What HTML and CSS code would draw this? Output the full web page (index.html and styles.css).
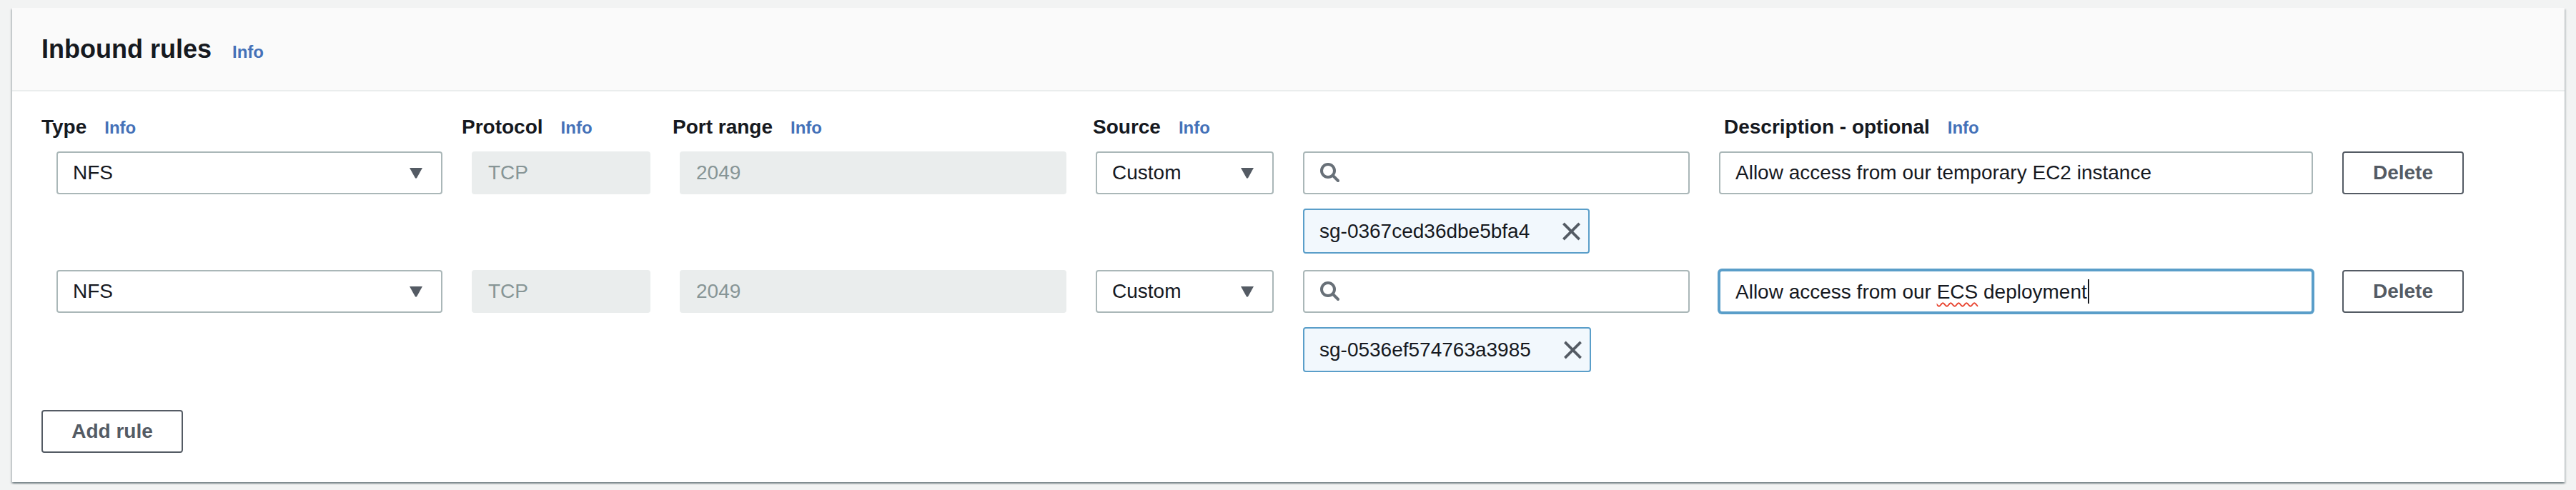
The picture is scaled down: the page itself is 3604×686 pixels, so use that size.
FILE: index.html
```html
<!DOCTYPE html>
<html lang="en">
<head>
<meta charset="utf-8">
<title>Inbound rules</title>
<link rel="stylesheet" href="styles.css">
</head>
<body>
<section class="panel">
  <header class="panel-header">
    <h2 class="panel-title">Inbound rules</h2>
    <a class="info info-lg" href="#">Info</a>
  </header>
  <div class="panel-body">
    <div class="labels">
      <div class="label"><span>Type</span><a class="info" href="#">Info</a></div>
      <div class="label"><span>Protocol</span><a class="info" href="#">Info</a></div>
      <div class="label"><span>Port range</span><a class="info" href="#">Info</a></div>
      <div class="label"><span>Source</span><a class="info" href="#">Info</a></div>
      <div class="label"><span>Description - optional</span><a class="info" href="#">Info</a></div>
    </div>

    <div class="rules">
      <div class="rule">
        <div class="field select"><span>NFS</span><svg class="caret" viewBox="0 0 20 16"><path d="M1 1 H19 L11.2 15 Q10 16.5 8.8 15 Z"/></svg></div>
        <div class="field disabled">TCP</div>
        <div class="field disabled">2049</div>
        <div class="field select"><span>Custom</span><svg class="caret" viewBox="0 0 20 16"><path d="M1 1 H19 L11.2 15 Q10 16.5 8.8 15 Z"/></svg></div>
        <div class="field search"><svg class="search-icon" viewBox="0 0 30 30"><circle cx="12" cy="12" r="9"/><line x1="18.5" y1="18.5" x2="26" y2="26"/></svg></div>
        <div class="field"><span>Allow access from our temporary EC2 instance</span></div>
        <button class="btn">Delete</button>
        <div class="token"><span>sg-0367ced36dbe5bfa4</span><svg class="x-icon" viewBox="0 0 28 28"><line x1="2" y1="2" x2="26" y2="26"/><line x1="26" y1="2" x2="2" y2="26"/></svg></div>
      </div>

      <div class="rule">
        <div class="field select"><span>NFS</span><svg class="caret" viewBox="0 0 20 16"><path d="M1 1 H19 L11.2 15 Q10 16.5 8.8 15 Z"/></svg></div>
        <div class="field disabled">TCP</div>
        <div class="field disabled">2049</div>
        <div class="field select"><span>Custom</span><svg class="caret" viewBox="0 0 20 16"><path d="M1 1 H19 L11.2 15 Q10 16.5 8.8 15 Z"/></svg></div>
        <div class="field search"><svg class="search-icon" viewBox="0 0 30 30"><circle cx="12" cy="12" r="9"/><line x1="18.5" y1="18.5" x2="26" y2="26"/></svg></div>
        <div class="field focused"><span class="field-text">Allow access from our <span class="misspelled">ECS</span> deployment<span class="text-caret"></span></span></div>
        <button class="btn">Delete</button>
        <div class="token"><span>sg-0536ef574763a3985</span><svg class="x-icon" viewBox="0 0 28 28"><line x1="2" y1="2" x2="26" y2="26"/><line x1="26" y1="2" x2="2" y2="26"/></svg></div>
      </div>
    </div>

    <button class="btn btn-add">Add rule</button>
  </div>
</section>
</body>
</html>
```

FILE: styles.css
```css
* {
  box-sizing: border-box;
}

html, body {
  margin: 0;
}

body {
  background: #f2f3f3;
  padding: 11px 16px 10px 17px;
  font-family: "Liberation Sans", Arial, sans-serif;
  color: #16191f;
}

.panel {
  background: #ffffff;
  box-shadow: 0 2px 2px 0 rgba(0, 28, 36, 0.3),
              2px 2px 2px 0 rgba(0, 28, 36, 0.15),
              -2px 2px 2px 0 rgba(0, 28, 36, 0.15);
}

.panel-header {
  display: flex;
  align-items: baseline;
  gap: 29px;
  height: 117px;
  padding: 36px 40px 0 41px;
  background: #fafafa;
  border-bottom: 2px solid #eaeded;
}

.panel-title {
  margin: 0;
  font-size: 36px;
  line-height: 44px;
  font-weight: 700;
  color: #16191f;
}

.info {
  font-size: 24px;
  font-weight: 700;
  color: #4471b8;
  text-decoration: none;
}

.panel-body {
  padding: 30px 40px 41px 41px;
}

.labels {
  display: grid;
  grid-template-columns: 588px 295px 588px 883px 1fr;
  height: 40px;
}

.label {
  display: flex;
  align-items: baseline;
  gap: 25px;
  font-size: 28px;
  line-height: 40px;
  font-weight: 700;
}

.rules {
  display: flex;
  flex-direction: column;
  gap: 23px;
  margin-top: 14px;
  padding-left: 21px;
}

.rule {
  display: grid;
  grid-template-columns: 540px 250px 541px 249px 541px 831px 170px;
  grid-template-rows: 60px 63px;
  column-gap: 41px;
  row-gap: 20px;
}

.field {
  display: flex;
  align-items: center;
  height: 60px;
  padding: 0 25px 0 21px;
  border: 2px solid #aab7b8;
  border-radius: 4px;
  background: #ffffff;
  font-size: 28px;
  color: #16191f;
  white-space: nowrap;
}

.field-text {
  white-space: pre;
}

.select {
  justify-content: space-between;
}

.caret {
  width: 20px;
  height: 16px;
  fill: #545b64;
}

.disabled {
  background: #eaeded;
  border-color: #eaeded;
  color: #879596;
}

.search-icon {
  width: 30px;
  height: 30px;
  fill: none;
  stroke: #687078;
  stroke-width: 4;
  stroke-linecap: round;
}

.focused {
  border-color: #5a9ec9;
  box-shadow: 0 0 0 2px #5a9ec9;
}

.misspelled {
  text-decoration: underline wavy #e8432f;
  text-decoration-thickness: 2px;
  text-underline-offset: 5px;
}

.text-caret {
  display: inline-block;
  width: 2px;
  height: 34px;
  margin-left: 1px;
  vertical-align: -7px;
  background: #16191f;
}

.btn {
  display: flex;
  align-items: center;
  justify-content: center;
  height: 60px;
  padding: 0;
  border: 2px solid #545b64;
  border-radius: 4px;
  background: #ffffff;
  font-family: "Liberation Sans", Arial, sans-serif;
  font-size: 28px;
  font-weight: 700;
  color: #545b64;
}

.btn-add {
  width: 198px;
  margin-top: 53px;
}

.token {
  grid-column: 5;
  grid-row: 2;
  justify-self: start;
  display: flex;
  align-items: center;
  gap: 45px;
  height: 63px;
  padding: 0 10px 0 21px;
  border: 2px solid #5a9ec9;
  border-radius: 4px;
  background: #f2f8fd;
  font-size: 28px;
  color: #16191f;
  white-space: nowrap;
}

.x-icon {
  width: 27px;
  height: 26px;
  stroke: #545b64;
  stroke-width: 4;
}
```
